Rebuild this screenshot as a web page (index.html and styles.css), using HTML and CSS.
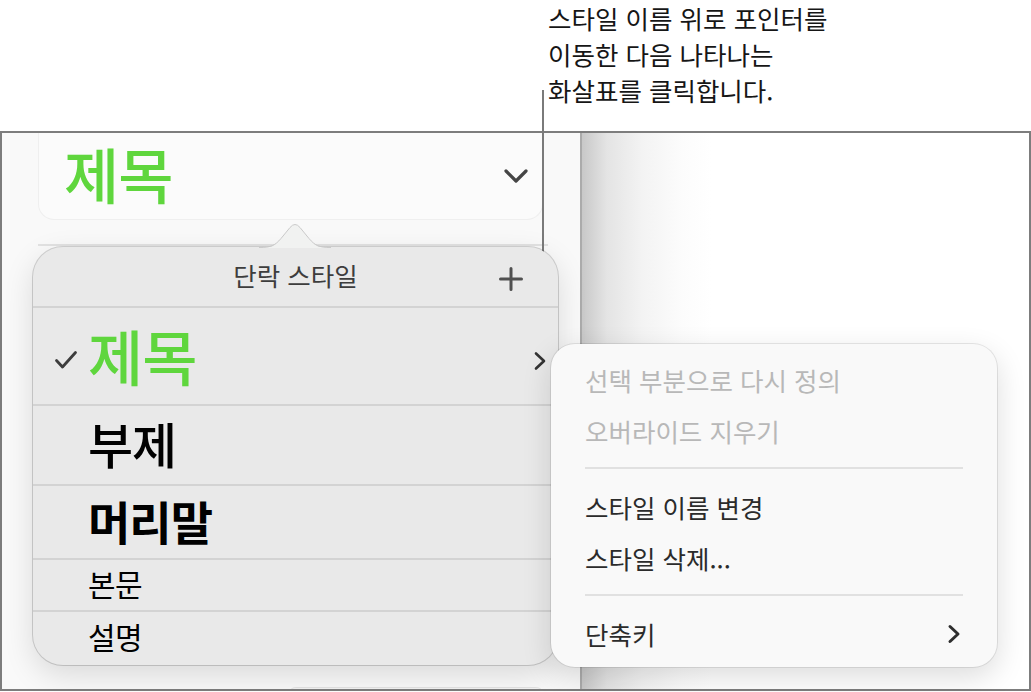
FILE: index.html
```html
<!DOCTYPE html>
<html lang="ko">
<head>
<meta charset="utf-8">
<link rel="stylesheet" href="styles.css">
</head>
<body>
<div class="page">
  <div class="callout-area">
    <p class="callout">스타일 이름 위로 포인터를<br>이동한 다음 나타나는<br>화살표를 클릭합니다.</p>
  </div>
  <div class="frame">
    <aside class="sidebar">
      <div class="title-card">
        <span class="title-text">제목</span>
        <svg class="chev-down" width="26" height="16" viewBox="0 0 26 16"><path d="M3 3 L13 13 L23 3" fill="none" stroke="#454545" stroke-width="3.2" stroke-linecap="round" stroke-linejoin="round"/></svg>
      </div>
      <div class="sep"></div>
      <div class="bottom-card"></div>
    </aside>
    <main class="canvas"></main>
  </div>

  <div class="leader"></div>

  <div class="popover">
    <svg class="pop-arrow" width="72" height="26" viewBox="0 0 72 26">
      <path d="M0 26 C 12 26 16 24 22 17 L 31 6 Q 36 0 41 6 L 50 17 C 56 24 60 26 72 26 Z" fill="#f1f2f1"/>
      <path d="M0 25.5 C 12 25.5 16 23.5 22 16.5 L 31 5.5 Q 36 -0.5 41 5.5 L 50 16.5 C 56 23.5 60 25.5 72 25.5" fill="none" stroke="#c9c9c9" stroke-width="1"/>
    </svg>
    <div class="pop-header">
      <span class="pop-title">단락 스타일</span>
      <svg class="plus" width="24" height="24" viewBox="0 0 24 24"><path d="M12 1.5 V22.5 M1.5 12 H22.5" fill="none" stroke="#505050" stroke-width="3" stroke-linecap="round"/></svg>
    </div>
    <div class="row row-title">
      <svg class="check" width="24" height="20" viewBox="0 0 24 20"><path d="M2.5 10.5 L8.5 17 L21.5 2.5" fill="none" stroke="#3d3d3d" stroke-width="2.8" stroke-linecap="round" stroke-linejoin="round"/></svg>
      <span class="t-title">제목</span>
      <svg class="row-chev" width="14" height="20" viewBox="0 0 14 20"><path d="M3 2.5 L11 10 L3 17.5" fill="none" stroke="#333" stroke-width="2.6" stroke-linecap="round" stroke-linejoin="round"/></svg>
    </div>
    <div class="row row-sub"><span class="t-sub">부제</span></div>
    <div class="row row-head"><span class="t-head">머리말</span></div>
    <div class="row row-body"><span class="t-body">본문</span></div>
    <div class="row row-cap"><span class="t-body">설명</span></div>
  </div>

  <div class="menu">
    <div class="item disabled">선택 부분으로 다시 정의</div>
    <div class="item disabled">오버라이드 지우기</div>
    <div class="menu-sep"></div>
    <div class="item">스타일 이름 변경</div>
    <div class="item">스타일 삭제...</div>
    <div class="menu-sep"></div>
    <div class="item item-sub">
      <span>단축키</span>
      <svg width="14" height="20" viewBox="0 0 14 20"><path d="M3 2.5 L11 10 L3 17.5" fill="none" stroke="#2e2e2e" stroke-width="3" stroke-linecap="round" stroke-linejoin="round"/></svg>
    </div>
  </div>
</div>
</body>
</html>
```

FILE: styles.css
```css
* { box-sizing: border-box; }
html, body { margin: 0; padding: 0; }
body {
  background: #fff;
  font-family: "Noto Sans CJK KR", "Noto Sans", sans-serif;
  color: #1a1a1a;
}
.page {
  position: relative;
  width: 1031px;
  height: 692px;
  overflow: hidden;
}
.callout-area {
  height: 131px;
  padding-left: 548px;
  padding-top: 0;
}
.callout {
  margin: 0;
  font-size: 25.5px;
  line-height: 36px;
  color: #161616;
  letter-spacing: 0;
}
.frame {
  display: flex;
  height: 560px;
  border: 2px solid #7d7d7d;
}
.sidebar {
  width: 580px;
  flex: none;
  background: #f9f9f9;
  border-right: 2px solid #ababab;
  overflow: hidden;
  display: flex;
  flex-direction: column;
}
.title-card {
  margin-left: 36px;
  width: 505px;
  height: 87px;
  flex: none;
  background: #fbfbfb;
  border: 1px solid #efefef;
  border-top: none;
  border-radius: 0 0 16px 16px;
  display: flex;
  align-items: center;
  justify-content: space-between;
  padding: 0 13px 0 25px;
}
.title-text {
  font-size: 60px;
  font-weight: 500;
  color: #5fd63d;
  line-height: 70px;
  margin-top: -6px;
  letter-spacing: -1px;
}
.sep {
  margin: 24px 0 0 36px;
  width: 510px;
  height: 2px;
  flex: none;
  background: #e2e2e2;
}
.bottom-card {
  margin: 441px 0 0 286px;
  width: 256px;
  height: 12px;
  flex: none;
  background: #f3f3f3;
  border-top: 1px solid #e3e3e3;
  border-radius: 8px 8px 0 0;
}
.canvas {
  flex: 1;
  background: linear-gradient(90deg, #c8c8c8 0, #e4e4e4 25px, #f3f3f3 60px, #fcfcfc 100px, #ffffff 130px);
}
.leader {
  position: absolute;
  left: 542px;
  top: 90px;
  width: 2px;
  height: 260px;
  background: #7a7a7a;
}
.popover {
  position: absolute;
  left: 33px;
  top: 247px;
  width: 525px;
  height: 418px;
  background: #e9e9e9;
  border-radius: 30px;
  box-shadow: 0 0 0 1px rgba(0,0,0,0.16), 0 10px 30px rgba(0,0,0,0.13);
}
.pop-arrow {
  position: absolute;
  left: 226px;
  top: -25px;
}
.pop-header {
  position: relative;
  height: 59px;
  display: flex;
  align-items: center;
  justify-content: center;
}
.pop-title {
  font-size: 25.5px;
  color: #3d3d3d;
  margin-top: -2px;
  line-height: 1.2;
}
.plus {
  position: absolute;
  right: 35px;
  top: 20px;
}
.row {
  position: relative;
  border-top: 2px solid #d3d3d3;
  display: flex;
  align-items: center;
  padding-left: 55px;
  color: #000;
}
.row-title { height: 98px; }
.row-sub { height: 80px; }
.row-head { height: 74px; }
.row-body { height: 52px; }
.row-cap { height: 55px; }
.check {
  position: absolute;
  left: 21px;
  top: 42px;
}
.row-chev {
  position: absolute;
  left: 500px;
  top: 43px;
}
.t-title {
  font-size: 60px;
  font-weight: 500;
  color: #5fd63d;
  line-height: 1.1;
  margin-top: -2px;
  letter-spacing: -1px;
}
.t-sub {
  font-size: 49px;
  font-weight: 500;
  line-height: 1.1;
  margin-top: -4px;
  letter-spacing: -1px;
}
.t-head {
  font-size: 46px;
  font-weight: 700;
  line-height: 1.1;
  margin-top: -4px;
  letter-spacing: -1px;
}
.t-body {
  font-size: 30px;
  line-height: 1.1;
  margin-top: -4px;
  letter-spacing: -0.5px;
}
.menu {
  position: absolute;
  left: 551px;
  top: 344px;
  width: 446px;
  height: 323px;
  background: #f9f9f9;
  border-radius: 24px;
  box-shadow: 0 0 0 1px rgba(0,0,0,0.09), 0 10px 30px rgba(0,0,0,0.14);
  padding: 10px 0 8px;
}
.item {
  height: 51px;
  display: flex;
  align-items: center;
  padding: 0 36px 0 34px;
  font-size: 25.5px;
  color: #2b2b2b;
}
.item.disabled { color: #b8b8b8; }
.item-sub { justify-content: space-between; }
.menu-sep {
  height: 2px;
  margin: 11px 34px 12px;
  background: #e1e1e1;
}
```
